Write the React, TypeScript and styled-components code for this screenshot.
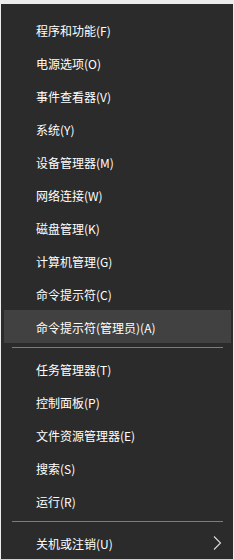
import React from "react";
import styled, { createGlobalStyle } from "styled-components";

const Global = createGlobalStyle`
  html, body { margin: 0; padding: 0; background: #ececec; }
  body { width: 234px; height: 559px; overflow: hidden; }
`;

const Menu = styled.div`
  margin: 4px 1px 0 1px;
  height: 555px;
  background: #2b2b2b;
  padding: 9px 2px 0 3px;
  box-sizing: border-box;
  display: flex;
  flex-direction: column;
  font-family: "Noto Sans CJK SC", "Noto Sans", sans-serif;
  font-size: 12px;
  color: #ffffff;
`;

const Item = styled.div<{ $active?: boolean }>`
  height: 33px;
  display: flex;
  align-items: center;
  justify-content: space-between;
  padding: 1px 9px 0 32px;
  box-sizing: border-box;
  background: ${(p) => (p.$active ? "#414141" : "transparent")};
  white-space: nowrap;
`;

const Separator = styled.div`
  height: 1px;
  margin: 4px 8px 4px 8px;
  background: #7c7c7c;
`;

const Chevron = () => (
  <svg width="9" height="14" viewBox="0 0 9 14" style={{ display: "block", marginTop: -1 }}>
    <path d="M1 0.5 L7.5 7 L1 13.5" fill="none" stroke="#dcdcdc" strokeWidth="1.1" />
  </svg>
);

const group1 = [
  "程序和功能(F)",
  "电源选项(O)",
  "事件查看器(V)",
  "系统(Y)",
  "设备管理器(M)",
  "网络连接(W)",
  "磁盘管理(K)",
  "计算机管理(G)",
  "命令提示符(C)",
  "命令提示符(管理员)(A)",
];
const group2 = ["任务管理器(T)", "控制面板(P)", "文件资源管理器(E)", "搜索(S)", "运行(R)"];

export default function App() {
  return (
    <>
      <Global />
      <Menu>
        {group1.map((t, i) => (
          <Item key={t} $active={i === group1.length - 1}>
            <span>{t}</span>
          </Item>
        ))}
        <Separator />
        {group2.map((t) => (
          <Item key={t}>
            <span>{t}</span>
          </Item>
        ))}
        <Separator />
        <Item>
          <span>关机或注销(U)</span>
          <Chevron />
        </Item>
      </Menu>
    </>
  );
}
